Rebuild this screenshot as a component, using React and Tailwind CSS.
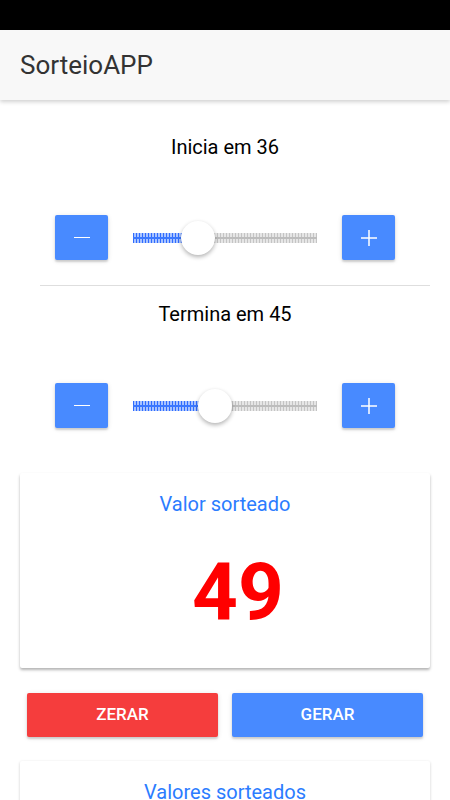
import { useState } from "react";

function Range({ value, min, max }) {
  const pct = ((value - min) / (max - min)) * 100;
  return (
    <div className="relative flex-1 mx-[25px] h-[45px] flex items-center">
      <div className="relative w-full h-[10px] bg-[repeating-linear-gradient(90deg,#c4c4c4_0px,#c4c4c4_1px,#e6e6e6_1px,#e6e6e6_3px)]">
        <div className="absolute left-0 right-0 top-[4px] h-[2px] bg-[#bdbdbd]" />
        <div
          className="absolute left-0 top-0 h-full bg-[repeating-linear-gradient(90deg,#2f6bff_0px,#2f6bff_1px,#a9c4ff_1px,#a9c4ff_3px)]"
          style={{ width: `${pct}%` }}
        >
          <div className="absolute left-0 right-0 top-[4px] h-[2px] bg-[#3b78ff]" />
        </div>
      </div>
      <div
        className="absolute top-1/2 w-[34px] h-[34px] -ml-[17px] -mt-[17px] rounded-full bg-white shadow-[0_2px_4px_rgba(0,0,0,0.3)]"
        style={{ left: `${pct}%` }}
      />
    </div>
  );
}

function Stepper({ value, min, max }) {
  return (
    <div className="flex items-center px-[55px]">
      <button className="w-[53px] h-[45px] rounded-[2px] bg-[#488aff] flex items-center justify-center shadow-[0_2px_2px_rgba(0,0,0,0.14),0_1px_5px_rgba(0,0,0,0.12)]">
        <span className="block w-[16px] h-[1.5px] bg-white" />
      </button>
      <Range value={value} min={min} max={max} />
      <button className="w-[53px] h-[45px] rounded-[2px] bg-[#488aff] flex items-center justify-center shadow-[0_2px_2px_rgba(0,0,0,0.14),0_1px_5px_rgba(0,0,0,0.12)]">
        <svg width="18" height="18" viewBox="0 0 18 18">
          <path d="M9 1v16M1 9h16" stroke="#fff" strokeWidth="1.5" />
        </svg>
      </button>
    </div>
  );
}

export default function App() {
  const [inicio] = useState(36);
  const [fim] = useState(45);

  return (
    <div className="w-[450px] h-[800px] overflow-hidden bg-white font-['Roboto',sans-serif]">
      <div className="h-[30px] bg-black" />
      {/* Toolbar */}
      <header className="relative z-10 h-[70px] bg-[#f8f8f8] flex items-center pl-[20px] shadow-[0_2px_4px_rgba(0,0,0,0.18)]">
        <h1 className="text-[26px] font-normal text-[#333333]">SorteioAPP</h1>
      </header>

      <div className="mt-[35px] text-center text-[20px] leading-[24px] text-black">Inicia em {inicio}</div>
      <div className="mt-[56px]">
        <Stepper value={inicio} min={1} max={100} />
      </div>
      <div className="mt-[25px] ml-[40px] mr-[20px] h-px bg-[#dedede]" />

      <div className="mt-[16px] text-center text-[20px] leading-[24px] text-black">Termina em {fim}</div>
      <div className="mt-[57px]">
        <Stepper value={fim} min={1} max={100} />
      </div>

      {/* Resultado */}
      <div className="mt-[45px] mx-[20px] h-[195px] bg-white rounded-[2px] shadow-[0_2px_3px_rgba(0,0,0,0.3)] flex flex-col items-center">
        <div className="mt-[19px] text-[20px] leading-[24px] text-[#2b7cff]">Valor sorteado</div>
        <div className="mt-[36px] pl-[26px] text-[80px] leading-[80px] font-bold text-[#ff0000]">49</div>
      </div>

      <div className="mt-[25px] px-[27px] flex gap-[14px]">
        <button className="flex-1 h-[44px] rounded-[2px] bg-[#f53d3d] text-white text-[17px] font-medium uppercase shadow-[0_2px_2px_rgba(0,0,0,0.14),0_1px_5px_rgba(0,0,0,0.12)]">
          Zerar
        </button>
        <button className="flex-1 h-[44px] rounded-[2px] bg-[#488aff] text-white text-[17px] font-medium uppercase shadow-[0_2px_2px_rgba(0,0,0,0.14),0_1px_5px_rgba(0,0,0,0.12)]">
          Gerar
        </button>
      </div>

      <div className="mt-[24px] mx-[20px] h-[120px] bg-white rounded-[2px] shadow-[0_1px_3px_rgba(0,0,0,0.2)] flex flex-col items-center">
        <div className="mt-[19px] text-[20px] leading-[24px] text-[#2b7cff]">Valores sorteados</div>
      </div>
    </div>
  );
}
